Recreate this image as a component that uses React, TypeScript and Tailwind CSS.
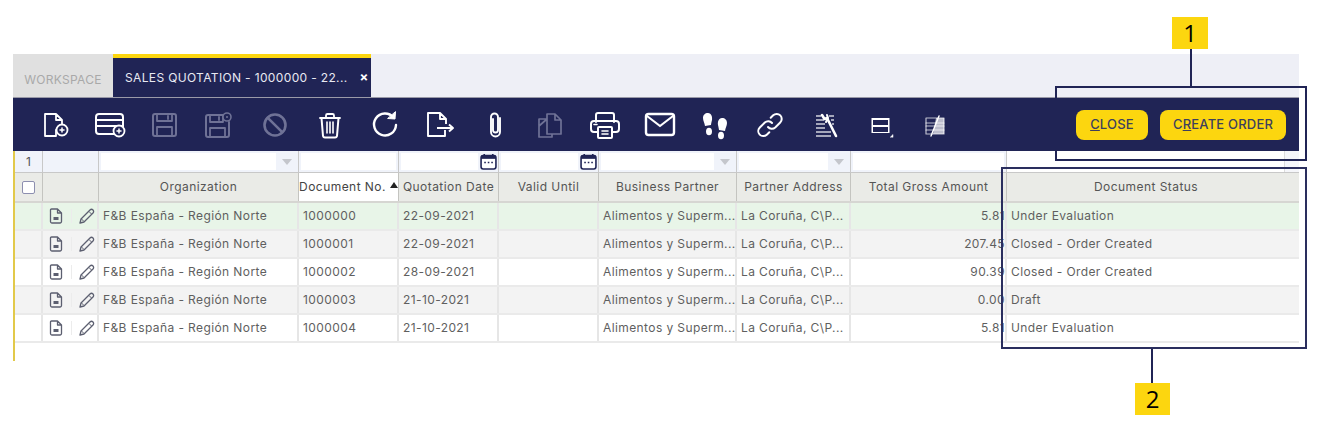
import React from "react";

const gridCols = "grid grid-cols-[28px_56px_200px_100px_100px_100px_138px_114px_156px_1fr]";

const rows = [
  { no: "1000000", date: "22-09-2021", total: "5.81", status: "Under Evaluation", bg: "bg-[#e8f5e8]" },
  { no: "1000001", date: "22-09-2021", total: "207.45", status: "Closed - Order Created", bg: "bg-[#f3f3f3]" },
  { no: "1000002", date: "28-09-2021", total: "90.39", status: "Closed - Order Created", bg: "bg-white" },
  { no: "1000003", date: "21-10-2021", total: "0.00", status: "Draft", bg: "bg-[#f3f3f3]" },
  { no: "1000004", date: "21-10-2021", total: "5.81", status: "Under Evaluation", bg: "bg-white" },
];

function Tool({ dim, children }: { dim?: boolean; children: React.ReactNode }) {
  return (
    <div className="w-[55px] flex justify-center shrink-0">
      <svg
        viewBox="0 0 40 40"
        width={40}
        height={40}
        fill="none"
        stroke="currentColor"
        strokeWidth={2}
        strokeLinejoin="round"
        strokeLinecap="round"
        className={dim ? "text-[#6f7296]" : "text-white"}
      >
        {children}
      </svg>
    </div>
  );
}

function PlusBadge({ x, y }: { x: number; y: number }) {
  return (
    <>
      <circle cx={x} cy={y} r={5.5} fill="#202455" strokeWidth={1.8} />
      <path d={`M${x - 2} ${y}h4M${x} ${y - 2}v4`} strokeWidth={1.5} />
    </>
  );
}

function Toolbar() {
  return (
    <div className="h-[54px] bg-[#202455] border-t border-[#9a9aa8] flex items-center pl-[14px] pr-[13px]">
      <Tool>
        <path d="M21 25v6H10V9h11l6 6v4M21 9v6h6" strokeWidth={1.8} />
        <PlusBadge x={27} y={25} />
      </Tool>
      <Tool>
        <rect x={6} y={9} width={27} height={20} rx={3} />
        <path d="M6 15h27M6 21h27" />
        <PlusBadge x={29} y={26} />
      </Tool>
      <Tool dim>
        <rect x={8} y={9} width={23} height={22} rx={2} />
        <path d="M12 9v7h15V9M23 11v3M12 31v-9h15v9" strokeWidth={1.8} />
      </Tool>
      <Tool dim>
        <path d="M23 10H8a2 2 0 0 0-2 2v18a2 2 0 0 0 2 2h19a2 2 0 0 0 2-2V17" />
        <path d="M10 10v7h13v-7M19 12v3M10 32v-9h15v9" strokeWidth={1.8} />
        <circle cx={27} cy={12} r={4} fill="#202455" strokeWidth={1.6} />
        <circle cx={27} cy={12} r={1} fill="currentColor" stroke="none" />
      </Tool>
      <Tool dim>
        <circle cx={20} cy={20} r={10.5} strokeWidth={2.6} />
        <path d="M12.8 12.8l14.4 14.4" strokeWidth={2.6} />
      </Tool>
      <Tool>
        <path d="M10 13h20M16 13v-2.500a1.500 1.500 0 0 1 1.500-1.500h5a1.500 1.500 0 0 1 1.500 1.500V13" strokeWidth={1.8} />
        <path d="M11.500 13l1.500 18a2 2 0 0 0 2 1.500h10a2 2 0 0 0 2-1.500l1.500-18" />
        <path d="M17 17v11M20 17v11M23 17v11" strokeWidth={1.6} />
      </Tool>
      <Tool>
        <path d="M28.500 12.500A11 11 0 1 0 31 20" strokeWidth={2.4} />
        <path d="M23 13.500l7 .5 .5-7z" fill="currentColor" strokeWidth={1} />
      </Tool>
      <Tool>
        <path d="M25 25v6H8V8h12l6 6v5M20 8v6h6M17 23h16M29 19.500l4 3.500-4 3.500" strokeWidth={1.9} strokeLinecap="butt" />
      </Tool>
      <Tool>
        <path d="M24 14v13a5 5 0 0 1-9.500 0V13a5 5 0 0 1 11 0v15" strokeWidth={0} />
        <path d="M17.500 14v11a2.500 2.500 0 0 0 5 0V12a3.500 3.500 0 0 0-7 0v15a4.500 4.500 0 0 0 9 0V13" strokeWidth={1.9} transform="translate(0.500 0)" />
      </Tool>
      <Tool dim>
        <path d="M17 14h-8v18h13v-3M17 9v20h14V15l-6-6h-8zM25 9v6h6M9 21l8-7" strokeWidth={1.7} />
      </Tool>
      <Tool>
        <path d="M11 17V10a2 2 0 0 1 2-2h14a2 2 0 0 1 2 2v7" />
        <path d="M13 27H9a3 3 0 0 1-3-3v-5a3 3 0 0 1 3-3h22a3 3 0 0 1 3 3v5a3 3 0 0 1-3 3h-4" />
        <rect x={13} y={22} width={14} height={11} rx={1} />
        <path d="M17 26h6M17 29h6M9 19.500h3" strokeWidth={1.6} />
      </Tool>
      <Tool>
        <rect x={6} y={9} width={28} height={21} rx={2.500} strokeWidth={2.4} />
        <path d="M7 11l13 10 13-10" strokeWidth={2.2} />
      </Tool>
      <Tool>
        <g fill="currentColor" stroke="none">
          <path d="M13 8c3.500 0 4.500 4 4 7-.4 2-.8 3-1 5l-6 1c-.3-3-2-5-2-8 0-3 2-5 5-5z" />
          <ellipse cx={14} cy={26.500} rx={3} ry={3.800} />
          <path d="M27 13c3 0 5 2 5 5 0 3-1.700 5-2 8l-6-1c-.2-2-.6-3-1-5-.5-3 .5-7 4-7z" />
          <ellipse cx={26} cy={30.500} rx={3} ry={3.800} />
        </g>
      </Tool>
      <Tool>
        <path d="M18 22a5 5 0 0 0 7.200.5l5-5a5 5 0 0 0-7-7.200l-2.500 2.500" strokeWidth={2} />
        <path d="M22 18a5 5 0 0 0-7.200-.5l-5 5a5 5 0 0 0 7 7.200l2.500-2.500" strokeWidth={2} />
      </Tool>
      <Tool>
        <path d="M11 11h5M24 11h5M11 15h8M26 15h3M11 19h9M27 19h2M11 23h9M11 27h15M11 31h15" strokeWidth={1.5} strokeLinecap="butt" className="opacity-80" />
        <path d="M17 10l2.500 4 2.500-1 9 18" strokeWidth={2.6} />
        <path d="M22 10l1 3-2 4" strokeWidth={2} />
      </Tool>
      <Tool>
        <rect x={11.500} y={13} width={18} height={15} fill="#fff" strokeWidth={0} />
        <rect x={13} y={15} width={15} height={5} fill="#202455" stroke="none" />
        <rect x={13} y={22} width={15} height={5} fill="#202455" stroke="none" />
        <path d="M33 32v-2.500l-2.500 2.500z" fill="currentColor" strokeWidth={0.5} />
      </Tool>
      <Tool>
        <path d="M11 13h18v16H11z" strokeWidth={1.2} className="opacity-70" />
        <path d="M11 18h18M11 21h18M11 25h18" strokeWidth={1.2} className="opacity-70" />
        <path d="M21 13h8v16H18z" fill="currentColor" strokeWidth={0} className="opacity-70" />
        <path d="M24 11l-8 20" strokeWidth={1.4} />
      </Tool>
      <div className="ml-auto flex gap-3">
        <ToolButton w="w-[72px]">
          <span className="underline">C</span>LOSE
        </ToolButton>
        <ToolButton w="w-[126px]">
          C<span className="underline">R</span>EATE ORDER
        </ToolButton>
      </div>
    </div>
  );
}

function ToolButton({ w, children }: { w: string; children: React.ReactNode }) {
  return (
    <button className={`${w} h-[30px] rounded-[8px] bg-[#fcd60f] text-[#3d3f5e] text-[13px] font-medium tracking-[0.2px]`}>{children}</button>
  );
}

function Combo() {
  return (
    <div className="flex h-full bg-[#f0f3fa] border-r border-[#c8c8c8]">
      <div className="flex-1 m-[2px] mr-0 bg-white" />
      <div className="w-[22px] flex items-center justify-center">
        <div className="w-0 h-0 border-x-[5px] border-x-transparent border-t-[6px] border-t-[#c4c6cc]" />
      </div>
    </div>
  );
}

function DateFilter() {
  return (
    <div className="flex h-full bg-[#f0f3fa] border-r border-[#c8c8c8]">
      <div className="flex-1 m-[2px] mr-0 bg-white" />
      <div className="w-[20px] flex items-center justify-center">
        <svg viewBox="0 0 16 16" width={17} height={17} fill="none">
          <path d="M4 1v3M12 1v3" stroke="#202455" strokeWidth={1.5} />
          <rect x={1} y={2.500} width={14} height={12.500} rx={2} fill="#fff" stroke="#202455" strokeWidth={1.5} />
          <rect x={1} y={2.500} width={14} height={3} fill="#202455" />
          <path d="M4 9h1.500M7.300 9h1.500M10.600 9h1.500" stroke="#202455" strokeWidth={1.3} />
        </svg>
      </div>
    </div>
  );
}

function TextFilter() {
  return (
    <div className="h-full bg-[#f0f3fa] border-r border-[#c8c8c8] p-[2px]">
      <div className="h-full bg-white" />
    </div>
  );
}

function Head({ children, active }: { children: React.ReactNode; active?: boolean }) {
  return (
    <div
      className={`flex items-center justify-center border-r border-[#c4c4c0] text-[12px] tracking-[0.45px] whitespace-nowrap overflow-hidden ${
        active ? "bg-white text-[#444]" : "text-[#555]"
      }`}
    >
      {children}
    </div>
  );
}

function Cell({ children, right }: { children?: React.ReactNode; right?: boolean }) {
  return (
    <div
      className={`flex items-center border-r-2 border-[#e6e6e6] px-1 text-[12px] tracking-[0.4px] text-[#5f5f5f] whitespace-nowrap overflow-hidden ${
        right ? "justify-end pr-0" : ""
      }`}
    >
      {children}
    </div>
  );
}

function RowActions() {
  return (
    <div className="flex items-center border-r-2 border-[#e6e6e6] relative">
      <svg viewBox="0 0 14 16" width={14} height={16} fill="none" stroke="#5c5f70" strokeWidth={1.3} className="ml-[6px]">
        <path d="M2.500 1h6l4 4v8.500a1.500 1.500 0 0 1-1.500 1.500H3A1.500 1.500 0 0 1 1.500 13.500V2A1 1 0 0 1 2.500 1zM8.500 1v4h4" strokeLinejoin="round" />
        <path d="M4.500 9h5v3h-5z" fill="#5c5f70" stroke="none" />
      </svg>
      <div className="w-px h-[14px] bg-[#ececec] ml-[8px]" />
      <svg viewBox="0 0 16 16" width={16} height={16} fill="none" stroke="#5c5f70" strokeWidth={1.3} className="ml-[7px]" strokeLinejoin="round">
        <path d="M2 11L11 2a2 2 0 0 1 3 3L5 14l-4 1z" />
        <path d="M10 3.500l2.500 2.500M2.500 11l2.500 2.500" strokeWidth={1} />
      </svg>
    </div>
  );
}

export default function App() {
  return (
    <div className="relative w-[1326px] h-[427px] bg-white overflow-hidden font-['Inter','Liberation_Sans',sans-serif]">
      <div className="absolute left-[13px] top-[54px] w-[1286px]">
        {/* tabs */}
        <div className="h-[43px] bg-[#eeeff6] flex">
          <div className="w-[100px] bg-[#e0e0e0] text-[#a9a9a9] text-[12px] tracking-[0.3px] flex items-center justify-center pt-[9px]">WORKSPACE</div>
          <div className="w-[258px] bg-[#202455] border-t-[4px] border-[#fcd60f] text-[#e8e9f2] text-[12px] tracking-[0.35px] flex items-center pl-[12px] whitespace-nowrap">
            SALES QUOTATION - 1000000 - 22...
            <span className="ml-[12px] text-white text-[13px] font-bold">×</span>
          </div>
        </div>
        <Toolbar />

        {/* grid */}
        <div className="border-l-2 border-[#e2c94a] h-[210px]">
          <div className={`${gridCols} h-[22px] border-b border-[#c8c8c8]`}>
            <div className="flex items-center justify-center text-[12px] text-[#555] bg-[#f0f3fa] border-r border-[#c8c8c8]">1</div>
            <div className="bg-[#f0f3fa] border-r border-[#c8c8c8]" />
            <Combo />
            <TextFilter />
            <DateFilter />
            <DateFilter />
            <Combo />
            <Combo />
            <TextFilter />
            <div className="bg-[#f5f6fa] pr-[14px]">
              <div className="h-full bg-white border-r border-[#dcdcdc]" />
            </div>
          </div>
          <div className={`${gridCols} h-[30px] bg-[#eaebe7] border-b-2 border-[#d6d6d2]`}>
            <div className="flex items-center justify-center border-r border-[#c4c4c0]">
              <div className="w-[13px] h-[13px] -ml-[1px] bg-white border border-[#8d8fb0] rounded-[2px]" />
            </div>
            <div className="border-r border-[#c4c4c0]" />
            <Head>Organization</Head>
            <Head active>
              Document No.
              <span className="ml-[4px] mb-[4px] w-0 h-0 border-x-[4px] border-x-transparent border-b-[6px] border-b-[#222]" />
            </Head>
            <Head>Quotation Date</Head>
            <Head>Valid Until</Head>
            <Head>Business Partner</Head>
            <Head>Partner Address</Head>
            <Head>Total Gross Amount</Head>
            <div className="flex items-center justify-center text-[12px] tracking-[0.45px] text-[#555] pr-[14px]">Document Status</div>
          </div>
          {rows.map((r) => (
            <div key={r.no} className={`${gridCols} h-[28px] border-b-2 border-[#eaeaea] ${r.bg}`}>
              <div className="border-r-2 border-[#e6e6e6]" />
              <RowActions />
              <Cell>F&amp;B España - Región Norte</Cell>
              <Cell>{r.no}</Cell>
              <Cell>{r.date}</Cell>
              <Cell />
              <Cell>Alimentos y Superm...</Cell>
              <Cell>La Coruña, C\P...</Cell>
              <Cell right>{r.total}</Cell>
              <div className="flex items-center px-1 text-[12px] tracking-[0.4px] text-[#5f5f5f]">{r.status}</div>
            </div>
          ))}
        </div>
      </div>

      {/* callouts */}
      <div className="absolute left-[1055px] top-[86px] w-[252px] h-[75px] border-2 border-[#202455]" />
      <div className="absolute left-[1001px] top-[167px] w-[306px] h-[182px] border-2 border-[#2a2e5e]" />
      <div className="absolute left-[1190px] top-[48px] w-[2px] h-[38px] bg-[#202455]" />
      <div className="absolute left-[1151px] top-[349px] w-[2px] h-[34px] bg-[#202455]" />
      <div className="absolute left-[1172px] top-[17px] w-[36px] h-[32px] bg-[#fcd60f] flex items-center justify-center text-[24px] text-black font-['Open_Sans',sans-serif]">1</div>
      <div className="absolute left-[1135px] top-[383px] w-[35px] h-[32px] bg-[#fcd60f] flex items-center justify-center text-[24px] text-black font-['Open_Sans',sans-serif]">2</div>
    </div>
  );
}
